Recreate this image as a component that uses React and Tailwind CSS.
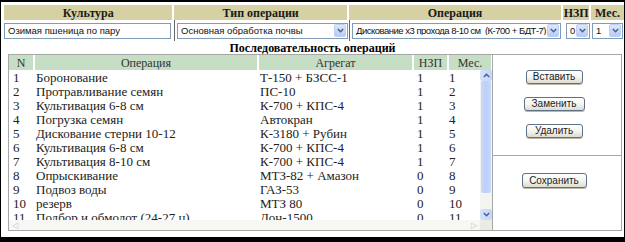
import React from "react";

const serif = { fontFamily: '"Liberation Serif", "Times New Roman", serif' };
const sans = { fontFamily: '"Liberation Sans", Arial, sans-serif' };

const rows = [
  [1, "Боронование", "Т-150 + БЗСС-1", 1, 1],
  [2, "Протравливание семян", "ПС-10", 1, 2],
  [3, "Культивация 6-8 см", "К-700 + КПС-4", 1, 3],
  [4, "Погрузка семян", "Автокран", 1, 4],
  [5, "Дискование стерни 10-12", "К-3180 + Рубин", 1, 5],
  [6, "Культивация 6-8 см", "К-700 + КПС-4", 1, 6],
  [7, "Культивация 8-10 см", "К-700 + КПС-4", 1, 7],
  [8, "Опрыскивание", "МТЗ-82 + Амазон", 0, 8],
  [9, "Подвоз воды", "ГАЗ-53", 0, 9],
  [10, "резерв", "МТЗ 80", 0, 10],
  [11, "Подбор и обмолот (24-27 ц)", "Дон-1500", 0, 11],
];

// XP-style combo arrow
const Arrow = () => (
  <div className="flex h-[13px] w-[12px] shrink-0 items-center justify-center rounded-[2px] border border-[#bcd0f4] bg-gradient-to-b from-[#dde7fc] to-[#b7cbf6]">
    <svg width="7" height="5" viewBox="0 0 7 5">
      <path d="M0.8 1 L3.5 3.7 L6.2 1" stroke="#4d6185" strokeWidth="1.5" fill="none" />
    </svg>
  </div>
);

const Select = ({ value, width, tight = false }) => (
  <div
    className="flex h-[16px] items-center border border-[#7f9db9] bg-white pl-[3px] pr-[1px]"
    style={{ width }}
  >
    <span
      className={`min-w-0 flex-1 overflow-hidden whitespace-pre text-[9.5px] leading-none text-[#111] ${tight ? "tracking-[-0.5px]" : ""}`}
      style={sans}
    >
      {value}
    </span>
    <Arrow />
  </div>
);

const XpButton = ({ label, w = "w-[57px]", h = "h-[14px]" }) => (
  <button
    className={`${w} ${h} flex items-center justify-center rounded-[3px] border border-[#5d7189] bg-gradient-to-b from-white via-[#f6f5f0] to-[#dedbd0] text-[10px] leading-none text-[#222] shadow-[0_1px_0_#b9b7ad]`}
    style={sans}
  >
    {label}
  </button>
);

const TopHead = ({ label, w }) => (
  <div
    className={`${w} flex h-[15px] items-center justify-center bg-[#d6d1a5] text-[12px] font-bold text-[#1a1a1a]`}
    style={serif}
  >
    {label}
  </div>
);

const GreenHead = ({ label, w }) => (
  <div
    className={`${w} flex h-[15px] items-center justify-center bg-[#c6dec4] text-[12px] text-[#333]`}
    style={serif}
  >
    {label}
  </div>
);

export default function App() {
  return (
    <div className="h-[242px] w-[625px] overflow-hidden bg-black pb-[5px] pl-[1px] pr-[1px] pt-[2px]">
      <div className="flex h-full flex-col bg-white">
        {/* top selection table */}
        <div className="flex gap-[2px] pl-[3px] pt-[3px]">
          <TopHead label="Культура" w="w-[169px]" />
          <TopHead label="Тип операции" w="w-[173px]" />
          <TopHead label="Операция" w="w-[213px]" />
          <TopHead label="НЗП" w="w-[26px]" />
          <TopHead label="Мес." w="w-[33px]" />
        </div>
        <div className="flex h-[21px] items-center pl-[3px]">
          <div className="flex h-full w-[171px] items-center border-r border-[#666]">
            <div
              className="flex h-[16px] w-[167px] items-center border border-[#7f9db9] pl-[3px] text-[9.5px] leading-none text-[#111]"
              style={sans}
            >
              Озимая пшеница по пару
            </div>
          </div>
          <div className="flex h-full w-[175px] items-center border-r border-[#666] pl-[2px]">
            <Select value="Основная обработка почвы" width={171} />
          </div>
          <div className="flex h-full w-[214px] items-center pl-[2px]">
            <Select value="Дискование x3 прохода 8-10 см  (К-700 + БДТ-7)" width={209} tight />
          </div>
          <div className="flex h-full w-[27px] items-center pl-[2px]">
            <Select value="0" width={24} />
          </div>
          <div className="flex h-full w-[33px] items-center pl-[1px]">
            <Select value="1" width={31} />
          </div>
        </div>
        <div
          className="flex h-[13px] items-center justify-center text-[12px] font-bold text-black"
          style={serif}
        >
          Последовательность операций
        </div>

        {/* operations list + actions */}
        <div className="ml-[7px] flex h-[177px] w-[614px]">
          <div className="flex w-[485px] flex-col border border-[#a7a7a7]">
            <div className="flex gap-[2px]">
              <GreenHead label="N" w="w-[24px]" />
              <GreenHead label="Операция" w="w-[222px]" />
              <GreenHead label="Агрегат" w="w-[153px]" />
              <GreenHead label="НЗП" w="w-[33px]" />
              <GreenHead label="Мес." w="w-[42px]" />
            </div>
            <div className="flex h-[150px]">
              <div className="flex-1 overflow-hidden">
                {rows.map(([n, op, agg, nzp, mes]) => (
                  <div
                    key={n}
                    className="flex h-[14px] items-center text-[13px] leading-none text-[#222]"
                    style={serif}
                  >
                    <div className="w-[26px] pl-[4px]">{n}</div>
                    <div className="w-[224px] whitespace-nowrap pl-[1px]">{op}</div>
                    <div className="w-[155px] whitespace-nowrap pl-[1px]">{agg}</div>
                    <div className="w-[35px] pl-[3px]">{nzp}</div>
                    <div>{mes}</div>
                  </div>
                ))}
              </div>
              {/* vertical scrollbar */}
              <div className="flex w-[12px] flex-col bg-[#f4f4f0]">
                <div className="flex h-[11px] items-center justify-center rounded-[2px] bg-gradient-to-r from-[#d6e2fb] to-[#c3d5fa]">
                  <svg width="7" height="5" viewBox="0 0 7 5">
                    <path d="M0.8 4 L3.5 1.3 L6.2 4" stroke="#4d6185" strokeWidth="1.5" fill="none" />
                  </svg>
                </div>
                <div className="mx-[1px] h-[112px] rounded-[2px] bg-gradient-to-r from-[#c9d8fa] via-[#bdd0f9] to-[#c9d8fa]" />
                <div className="flex-1" />
                <div className="flex h-[11px] items-center justify-center rounded-[2px] bg-gradient-to-r from-[#d6e2fb] to-[#c3d5fa]">
                  <svg width="7" height="5" viewBox="0 0 7 5">
                    <path d="M0.8 1 L3.5 3.7 L6.2 1" stroke="#4d6185" strokeWidth="1.5" fill="none" />
                  </svg>
                </div>
              </div>
            </div>
            {/* horizontal scrollbar */}
            <div className="flex flex-1">
              <div className="flex flex-1 items-center justify-between bg-[#f7f7f4] px-[3px] text-[8px] leading-none text-[#c8c8c0]">
                <span>◁</span>
                <span>▷</span>
              </div>
              <div className="w-[12px] bg-[#ecebe1]" />
            </div>
          </div>
          <div className="flex w-[129px] flex-col border-y border-r border-[#a7a7a7]">
            <div className="flex h-[101px] flex-col items-center gap-[13px] border-b border-[#a7a7a7] pr-[6px] pt-[15px]">
              <XpButton label="Вставить" />
              <XpButton label="Заменить" w="w-[61px]" />
              <XpButton label="Удалить" />
            </div>
            <div className="flex flex-col items-center pr-[6px] pt-[17px]">
              <XpButton label="Сохранить" w="w-[65px]" h="h-[15px]" />
            </div>
          </div>
        </div>
      </div>
    </div>
  );
}
